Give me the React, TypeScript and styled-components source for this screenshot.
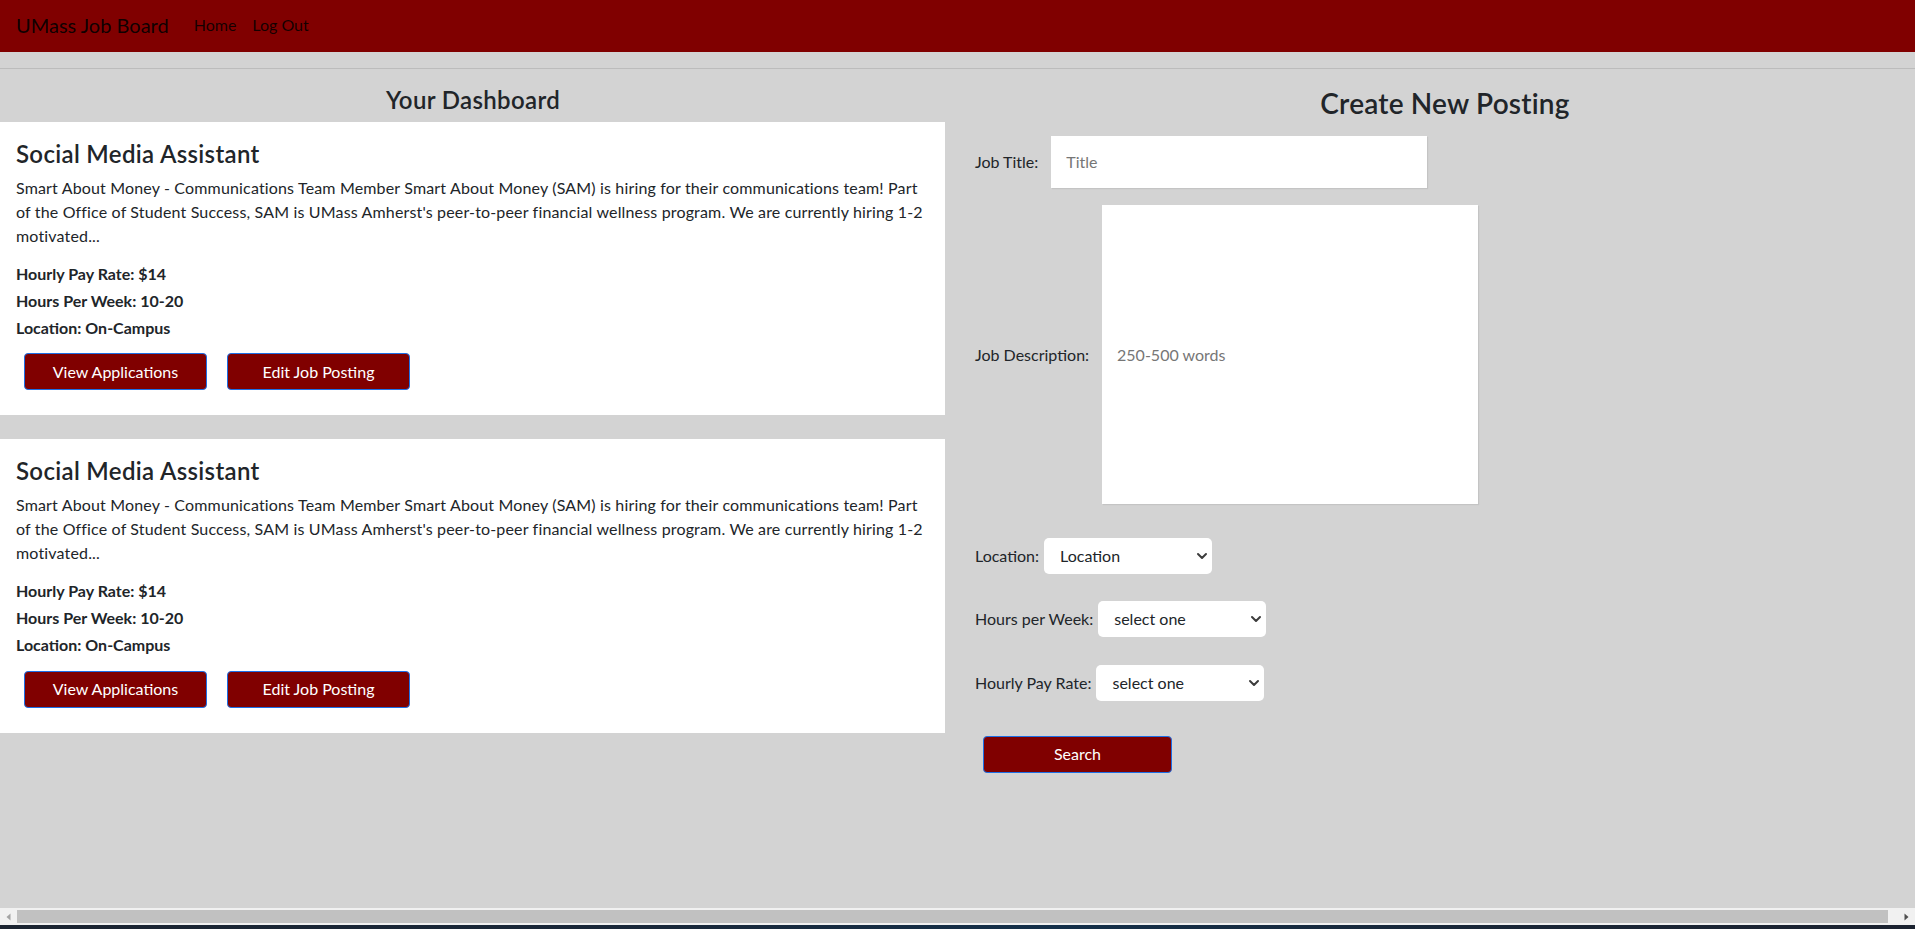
import React from "react";
import styled, { createGlobalStyle } from "styled-components";

const GlobalStyle = createGlobalStyle`
  html, body { margin: 0; padding: 0; height: 100%; overflow: hidden; }
  body {
    font-family: Lato, "Noto Sans", "Liberation Sans", sans-serif;
    background: #d3d3d3;
    color: #212529;
  }
  #root { height: 100%; }
  *, *::before, *::after { box-sizing: border-box; }
`;

const Page = styled.div`
  display: flex;
  flex-direction: column;
  height: 929px;
  background: #d3d3d3;
`;

const Navbar = styled.nav`
  flex-shrink: 0;
  height: 52px;
  background: #800000;
  display: flex;
  align-items: center;
  padding: 0 16px 2px 16px;
`;

const Brand = styled.a`
  font-size: 20px;
  line-height: 1;
  color: rgba(0, 0, 0, 0.9);
  text-decoration: none;
  margin-right: 17px;
`;

const NavLink = styled.a`
  font-size: 16px;
  line-height: 1;
  color: rgba(0, 0, 0, 0.85);
  text-decoration: none;
  padding: 0 8px;
`;

const Divider = styled.hr`
  flex-shrink: 0;
  margin: 16px 0;
  border: 0;
  border-top: 1px solid #bcbcbc;
  height: 0;
`;

const Main = styled.main`
  flex: 1;
  display: flex;
  align-items: flex-start;
  overflow: hidden;
`;

const LeftCol = styled.section`
  width: 946px;
  flex-shrink: 0;
`;

const DashTitle = styled.h4`
  margin: 0 0 7px;
  padding-top: 1px;
  font-size: 24px;
  font-weight: 600;
  line-height: 1.2;
  letter-spacing: 0.35px;
  text-align: center;
`;

const Card = styled.article`
  width: 945px;
  background: #fff;
  padding: 18px 16px 17px;
  margin-bottom: 24px;
`;

const CardTitle = styled.h4`
  margin: 0 0 7px;
  font-size: 24px;
  font-weight: 600;
  line-height: 1.2;
  letter-spacing: 0.33px;
`;

const Desc = styled.p`
  margin: 0 0 16px;
  font-size: 16px;
  line-height: 24px;
  letter-spacing: 0.16px;
`;

const Meta = styled.h6`
  margin: 0 0 8px;
  font-size: 16px;
  font-weight: 700;
  line-height: 1.2;
`;

const ButtonRow = styled.div`
  display: flex;
  gap: 20px;
  padding: 8px;
`;

const MaroonButton = styled.button<{ $w: number }>`
  width: ${(p) => p.$w}px;
  height: 37px;
  background: #800000;
  color: #fff;
  border: 1px solid #1d6fe6;
  border-radius: 4px;
  font-family: inherit;
  font-size: 16px;
  line-height: 1;
  padding: 0;
  cursor: pointer;
`;

const RightCol = styled.section`
  flex: 1;
  padding-left: 29px;
`;

const CreateTitle = styled.h3`
  margin: 0 0 15px;
  padding-top: 2px;
  font-size: 28px;
  font-weight: 600;
  line-height: 1.2;
  letter-spacing: 0.2px;
  text-align: center;
`;

const FormRow = styled.div<{ $mb: number }>`
  display: flex;
  align-items: center;
  margin-bottom: ${(p) => p.$mb}px;
`;

const Label = styled.label`
  font-size: 16px;
  color: #212529;
  white-space: nowrap;
`;

const TextField = styled.input<{ $h: number }>`
  width: 376px;
  height: ${(p) => p.$h}px;
  margin-left: 13px;
  border: none;
  background: #fff;
  box-shadow: 1px 1px 1px #c4c4c4;
  padding: 0 15px;
  font-family: inherit;
  font-size: 16px;
  color: #212529;
  outline: none;
  &::placeholder { color: #767676; }
`;

const SelectWrap = styled.div`
  position: relative;
  margin-left: 5px;
`;

const Select = styled.select`
  appearance: none;
  -webkit-appearance: none;
  width: 168px;
  height: 36px;
  border: none;
  border-radius: 5px;
  background: #fff;
  padding: 0 26px 0 16px;
  font-family: inherit;
  font-size: 16px;
  color: #212529;
  outline: none;
`;

const Chevron = styled.svg`
  position: absolute;
  right: 4px;
  top: 50%;
  transform: translateY(-50%);
  pointer-events: none;
`;

const SearchRow = styled.div`
  padding: 1px 0 0 8px;
`;

const ScrollTrack = styled.div`
  flex-shrink: 0;
  height: 17px;
  background: #f1f1f1;
  display: flex;
  align-items: center;
`;

const ScrollArrow = styled.div`
  width: 17px;
  height: 17px;
  display: flex;
  align-items: center;
  justify-content: center;
  flex-shrink: 0;
`;

const ScrollThumb = styled.div`
  flex: 1;
  height: 13px;
  background: #c1c1c1;
  margin-right: 10px;
`;

const Taskbar = styled.div`
  flex-shrink: 0;
  height: 4px;
  background: linear-gradient(90deg, #1b2431 0%, #19283a 35%, #14304a 55%, #1a2636 80%, #1b2230 100%);
`;

type Job = {
  title: string;
  desc: string;
  pay: string;
  hours: string;
  location: string;
};

const jobs: Job[] = [
  {
    title: "Social Media Assistant",
    desc:
      "Smart About Money - Communications Team Member Smart About Money (SAM) is hiring for their communications team! Part of the Office of Student Success, SAM is UMass Amherst's peer-to-peer financial wellness program. We are currently hiring 1-2 motivated...",
    pay: "$14",
    hours: "10-20",
    location: "On-Campus",
  },
  {
    title: "Social Media Assistant",
    desc:
      "Smart About Money - Communications Team Member Smart About Money (SAM) is hiring for their communications team! Part of the Office of Student Success, SAM is UMass Amherst's peer-to-peer financial wellness program. We are currently hiring 1-2 motivated...",
    pay: "$14",
    hours: "10-20",
    location: "On-Campus",
  },
];

const ChevronIcon = () => (
  <Chevron width="12" height="8" viewBox="0 0 12 8">
    <path d="M2 2 L6 6 L10 2" fill="none" stroke="#3c3c3c" strokeWidth="2" strokeLinecap="round" strokeLinejoin="round" />
  </Chevron>
);

const SelectField = ({ placeholder }: { placeholder: string }) => (
  <SelectWrap>
    <Select defaultValue="">
      <option value="">{placeholder}</option>
    </Select>
    <ChevronIcon />
  </SelectWrap>
);

export default function App() {
  return (
    <>
      <GlobalStyle />
      <Page>
        <Navbar>
          <Brand href="#">UMass Job Board</Brand>
          <NavLink href="#">Home</NavLink>
          <NavLink href="#">Log Out</NavLink>
        </Navbar>
        <Divider />
        <Main>
          <LeftCol>
            <DashTitle>Your Dashboard</DashTitle>
            {jobs.map((job, i) => (
              <Card key={i}>
                <CardTitle>{job.title}</CardTitle>
                <Desc>{job.desc}</Desc>
                <Meta>Hourly Pay Rate: {job.pay}</Meta>
                <Meta>Hours Per Week: {job.hours}</Meta>
                <Meta>Location: {job.location}</Meta>
                <ButtonRow>
                  <MaroonButton $w={183}>View Applications</MaroonButton>
                  <MaroonButton $w={183}>Edit Job Posting</MaroonButton>
                </ButtonRow>
              </Card>
            ))}
          </LeftCol>
          <RightCol>
            <CreateTitle>Create New Posting</CreateTitle>
            <FormRow $mb={17}>
              <Label>Job Title:</Label>
              <TextField $h={52} placeholder="Title" />
            </FormRow>
            <FormRow $mb={34}>
              <Label>Job Description:</Label>
              <TextField $h={299} placeholder="250-500 words" />
            </FormRow>
            <FormRow $mb={27}>
              <Label>Location:</Label>
              <SelectField placeholder="Location" />
            </FormRow>
            <FormRow $mb={28}>
              <Label>Hours per Week:</Label>
              <SelectField placeholder="select one" />
            </FormRow>
            <FormRow $mb={34}>
              <Label>Hourly Pay Rate:</Label>
              <SelectField placeholder="select one" />
            </FormRow>
            <SearchRow>
              <MaroonButton $w={189}>Search</MaroonButton>
            </SearchRow>
          </RightCol>
        </Main>
        <ScrollTrack>
          <ScrollArrow>
            <svg width="5" height="8" viewBox="0 0 5 8">
              <path d="M4.5 0.5 L0.5 4 L4.5 7.5 Z" fill="#a3a3a3" />
            </svg>
          </ScrollArrow>
          <ScrollThumb />
          <ScrollArrow>
            <svg width="5" height="8" viewBox="0 0 5 8">
              <path d="M0.5 0.5 L4.5 4 L0.5 7.5 Z" fill="#505050" />
            </svg>
          </ScrollArrow>
        </ScrollTrack>
        <Taskbar />
      </Page>
    </>
  );
}
